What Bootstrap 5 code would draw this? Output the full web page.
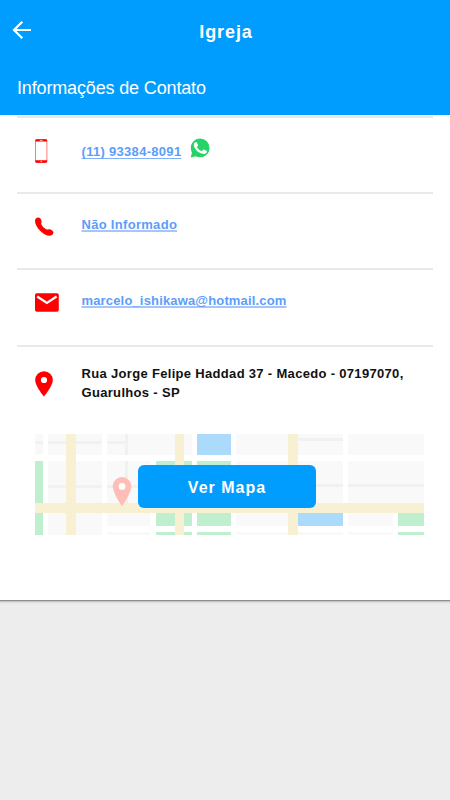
<!DOCTYPE html>
<html lang="pt-BR">
<head>
<meta charset="utf-8">
<meta name="viewport" content="width=device-width, initial-scale=1">
<title>Igreja</title>
<link href="https://cdn.jsdelivr.net/npm/bootstrap@5.3.0/dist/css/bootstrap.min.css" rel="stylesheet">
<style>
body{font-family:"Liberation Sans",Arial,sans-serif;background:#ededed;color:#111}
.app-head{background:#009dff;height:115px;z-index:1}
.top-row{height:60px;padding:4px 12px 0}
.back-btn{width:20px;height:20px;margin-top:-4px}
.page-title{font-size:18px;letter-spacing:.9px;line-height:22px;margin-right:18px}
.section-title{font-size:18px;line-height:22px;padding:17px 17px 0;letter-spacing:-.15px}
.sheet{height:485px}
.sheet-edge{height:4px;background:linear-gradient(#8c908f 0 1px,#c4c4c4 1px 2px,#e0e0e0 2px 3px,#e9e9e9 3px)}
.info-list{margin:0 17px;padding-top:1px}
.info-row{height:76.2px;border-top:2px solid #e9e9e9;padding-left:18px}
.icon-col{width:46.5px;flex:none;padding-top:22px}
.info-text{font-size:13px;font-weight:700;line-height:18.5px;letter-spacing:.3px;padding-top:22px}
.info-text a{color:#5c9dfa;text-decoration-color:#a9c3fb;text-decoration-thickness:2px;text-underline-offset:1px;text-decoration-skip-ink:none}
.row-mobile .icon-col{padding-top:21px}
.row-mobile .info-text{padding-top:20px}
.row-mobile .info-text a{margin-top:5px;text-decoration-color:#7fb0fb;text-decoration-thickness:1px;text-underline-offset:2px}
.wa-icon{margin-left:9px}
.row-mail .icon-col{padding-top:23px}
.mail-link{letter-spacing:.16px}
.row-address .icon-col{padding-top:24px}
.row-address .info-text{padding-top:17px;line-height:19px;letter-spacing:.32px}
.map-box{width:389px;height:101px;margin:13px 0 0 35px;padding:31px 0 0 103px}
.map-btn{width:178px;height:43px;background:#009dff;color:#fff;border-radius:6px;font-size:16px;letter-spacing:1px;z-index:1}
.map-btn:hover{background:#008ee6;color:#fff}
.map-art{inset:0}
</style>
</head>
<body>
<header class="app-head text-white position-relative">
  <div class="top-row d-flex align-items-center">
    <a href="#" class="back-btn d-flex" aria-label="Voltar">
      <svg width="20" height="20" viewBox="0 0 20 20" fill="none" stroke="#fff" stroke-width="2.2"><path d="M19 10H2.500M10.300 1.700L2 10l8.300 8.300"/></svg>
    </a>
    <h1 class="page-title flex-fill text-center fw-bold mb-0">Igreja</h1>
  </div>
  <h2 class="section-title fw-normal mb-0">Informações de Contato</h2>
</header>
<main>
<div class="sheet bg-white">
  <div class="info-list">
    <div class="info-row row-mobile d-flex">
      <div class="icon-col"><svg class="d-block" width="13" height="24" viewBox="0 0 13 24"><rect x=".5" y=".5" width="11.400" height="23" rx="1.400" fill="#fff" stroke="#ff7b7b"/><path d="M.3 2.600V1.500Q.3.2 1.600.2h9.200q1.300 0 1.300 1.300v1.100zM.3 21.200h11.800v1.200q0 1.300-1.300 1.300H1.600q-1.300 0-1.300-1.300z" fill="red"/><path d="M4.800 1.400h2.800M5.400 22.400h1.700" stroke="#fff" stroke-width=".7"/></svg></div>
      <div class="info-text d-flex"><a href="#">(11) 93384-8091</a>
        <svg class="wa-icon" width="20" height="20" viewBox="0 0 24 24"><path fill="#25d366" d="M.8 23.500l1.500-5.800A11.300 11.300 0 0 1 1 12C1 5.700 5.900.7 12.200.7a11.200 11.200 0 0 1 11.200 11.200c0 6.200-5 11.200-11.200 11.200a11.300 11.300 0 0 1-5.400-1.300z"/><path fill="#fff" transform="translate(12.200 12) scale(1.250) translate(-12.100 -11.950)" d="M17.470 14.380c-.3-.15-1.760-.87-2.030-.97-.27-.1-.47-.15-.67.15s-.77.97-.94 1.170c-.17.2-.35.220-.65.070-.3-.15-1.250-.46-2.390-1.470-.88-.79-1.480-1.760-1.650-2.060-.17-.3-.02-.46.130-.61.130-.13.3-.35.450-.52.150-.17.2-.3.3-.5.1-.2.050-.37-.03-.52-.07-.15-.67-1.610-.91-2.210-.24-.58-.49-.5-.67-.51h-.57c-.2 0-.52.070-.79.370-.27.3-1.040 1.020-1.040 2.480s1.070 2.870 1.210 3.070c.15.2 2.100 3.200 5.080 4.490 2.100.9 2.980.98 4.030.78.640-.1 1.760-.72 2.010-1.410.25-.69.25-1.290.17-1.410-.07-.12-.27-.2-.57-.35z"/></svg>
      </div>
    </div>
    <div class="info-row d-flex">
      <div class="icon-col"><svg class="d-block" width="19" height="21" viewBox="0 0 19 21"><path fill="red" d="M0 5C0 3 1.600 1.400 3.500 1.600c1.900.2 3.200 2.700 3.100 4.300-.1 1-.7 1.500-.2 2.500.9 1.900 2.800 3.700 4.700 4.800 1 .6 1.600.1 2.700 0 2-.1 4.500 1.300 4.600 3.100.2 2.100-2 3.700-4.500 3.500C8.400 19.400 0 11 0 5z"/></svg></div>
      <div class="info-text"><a href="#">Não Informado</a></div>
    </div>
    <div class="info-row row-mail d-flex">
      <div class="icon-col"><svg class="d-block" width="24" height="19" viewBox="0 0 24 19"><rect y=".3" width="23.800" height="18.400" rx="1.800" fill="red"/><path d="M2.200 3.500L11.900 10l9.700-6.500" fill="none" stroke="#fff" stroke-width="2.200"/></svg></div>
      <div class="info-text"><a href="#" class="mail-link">marcelo_ishikawa@hotmail.com</a></div>
    </div>
    <div class="info-row row-address d-flex">
      <div class="icon-col"><svg class="d-block" width="18" height="26" viewBox="0 0 18 26"><path fill="red" fill-rule="evenodd" d="M9 .2A8.800 8.800 0 0 0 .2 9C.2 15.300 9 25.500 9 25.500S17.800 15.300 17.800 9A8.800 8.800 0 0 0 9 .2zm0 5.700a3.100 3.100 0 1 1 0 6.200 3.100 3.100 0 0 1 0-6.200z"/></svg></div>
      <div class="info-text text-nowrap">Rua Jorge Felipe Haddad 37 - Macedo - 07197070,<br>Guarulhos - SP</div>
    </div>
  </div>
  <div class="map-box position-relative">
    <svg class="map-art position-absolute" width="389" height="101" viewBox="35 434 389 101" shape-rendering="crispEdges">
      <path fill="#f9f9f9" d="M35 434h8v21h-8zM48 434h54v21H48zM48 461h54v74H48zM107 434h85v21h-85zM107 461h43v65h-43zM107 532h43v3h-43zM236 434h52v21h-52zM236 461h52v65h-52zM236 532h52v3h-52zM298 434h45v21h-45zM298 461h45v42h-45zM298 532h45v3h-45zM348 434h76v21h-76zM348 461h76v42h-76zM348 513h45v13h-45zM348 532h45v3h-45z"/>
      <path fill="#f1f1f1" d="M35 441h8v3h-8zM48 441h54v3H48zM107 441h18v3h-18zM125 434h3v21h-3zM125 461h3v42h-3zM48 485h54v3H48zM107 485h43v3h-43zM298 438h45v3h-45zM298 484h45v3h-45zM348 484h76v3h-76z"/>
      <path fill="#c0efd0" d="M35 461h8v74h-8zM156 461h36v65h-36zM197 461h34v65h-34zM156 532h36v3h-36zM197 532h34v3h-34zM398 513h26v13h-26zM398 532h26v3h-26z"/>
      <path fill="#abdafb" d="M197 434h34v21h-34zM298 513h45v13h-45z"/>
      <path fill="#f8f0d3" d="M66 434h9.500v101H66zM174.500 434h9.500v101h-9.500zM288 434h10v101h-10zM35 503h389v10H35z"/>
      <path shape-rendering="auto" fill="#ffbdb7" d="M122 477a9.200 9.200 0 0 0-9.200 9.200c0 7 9.200 20 9.200 20s9.200-13 9.200-20A9.200 9.200 0 0 0 122 477z"/><circle shape-rendering="auto" cx="122" cy="486.400" r="3.400" fill="#fff"/>
    </svg>
    <button type="button" class="btn map-btn fw-bold border-0 px-0 pb-0 pt-1 position-relative d-block">Ver Mapa</button>
  </div>
</div>
<div class="sheet-edge"></div>
</main>
<script src="https://cdn.jsdelivr.net/npm/bootstrap@5.3.0/dist/js/bootstrap.bundle.min.js"></script>
</body>
</html>
